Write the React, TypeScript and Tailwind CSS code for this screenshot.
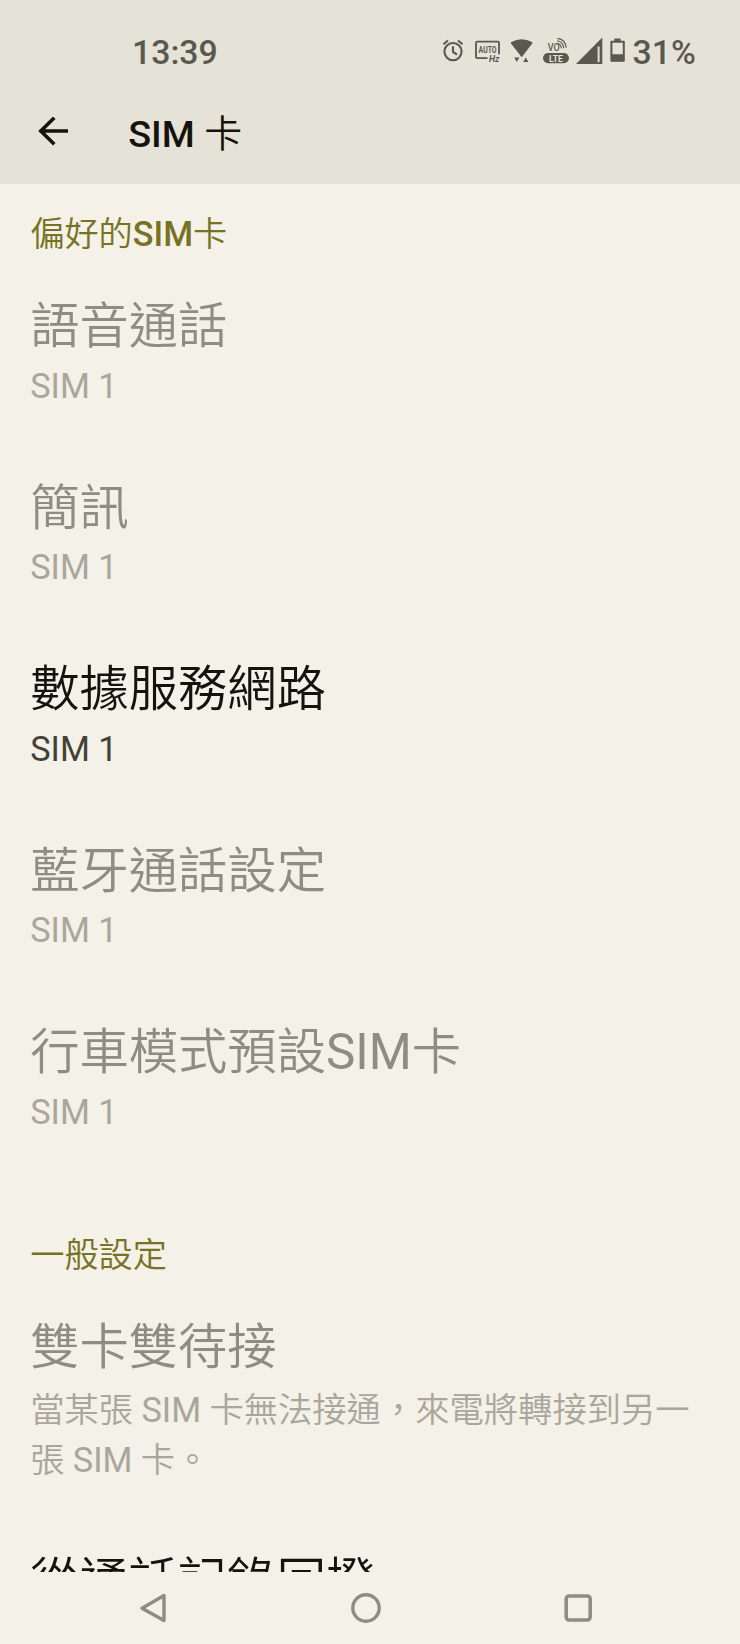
type Item = { title: string; summary: string; enabled?: boolean };

const preferred: Item[] = [
  { title: '語音通話', summary: 'SIM 1' },
  { title: '簡訊', summary: 'SIM 1' },
  { title: '數據服務網路', summary: 'SIM 1', enabled: true },
  { title: '藍牙通話設定', summary: 'SIM 1' },
  { title: '行車模式預設SIM卡', summary: 'SIM 1' },
];

/** Sets Latin runs in regular weight beside the lighter Chinese glyphs. */
function Mixed({ text }: { text: string }) {
  return (
    <>
      {text.split(/([A-Za-z0-9]+)/).map((part, i) =>
        i % 2 ? (
          <span key={i} className="font-normal">
            {part}
          </span>
        ) : (
          part
        ),
      )}
    </>
  );
}

function StatusIcons() {
  return (
    <svg className="h-[30px] w-[186px] shrink-0" viewBox="440 36 186 30" fill="none" stroke="#5a594f">
      {/* alarm */}
      <circle cx="453" cy="51.6" r="8.6" strokeWidth="2.1" />
      <path d="M453 46.3v5.6l4 2.8M443.4 44.2l4.6-3.7M462.6 44.2l-4.6-3.7" strokeWidth="2.1" />
      {/* auto refresh rate */}
      <path d="M487.5 58.2h-10.3q-1.2 0-1.2-1.2V42.8q0-1.2 1.2-1.2h20.6q1.2 0 1.2 1.2v11.4" strokeWidth="1.8" />
      <g fill="#5a594f" stroke="none" fontFamily="Roboto, sans-serif" fontWeight="700">
        <text x="478.6" y="53" fontSize="9.2" textLength="18" lengthAdjust="spacingAndGlyphs">AUTO</text>
        <text x="489" y="61.8" fontSize="8.4" fontStyle="italic" textLength="10.4" lengthAdjust="spacingAndGlyphs">Hz</text>
      </g>
      {/* wifi with traffic arrows */}
      <g fill="#5a594f" stroke="none">
        <path d="M521.7 57.2L510.8 43.2Q510.6 42.4 511.4 42Q521.7 36.4 532 42Q532.8 42.4 532.4 43.2Z" />
        <path d="M514.2 57.6h5.2l-2.6 4.4zM523.2 62h5.2l-2.6-4.5z" />
      </g>
      {/* VoLTE */}
      <g fill="#5a594f" stroke="none" fontFamily="Roboto, sans-serif">
        <text x="547.8" y="51.2" fontSize="10.2" fontWeight="500" textLength="12" lengthAdjust="spacingAndGlyphs">VO</text>
        <rect x="543" y="53" width="26" height="10.2" rx="5.1" />
        <text x="549" y="61.5" fontSize="9.4" fontWeight="700" fill="#e5e3d8" textLength="13.8" lengthAdjust="spacingAndGlyphs">LTE</text>
      </g>
      <path d="M557.2 43.4q3.8 .8 4.2 5M557.2 40.8q6 1 6.6 7.4M557.4 38.4q8.2 1.2 8.8 9.4" strokeWidth="1.1" />
      {/* signal */}
      <path d="M576 64L602.3 37.6V64Z" fill="#5a594f" stroke="none" />
      <path d="M598.6 46.5v15.6" stroke="#e5e3d8" strokeWidth="2" />
      {/* battery */}
      <path d="M611.4 41.8h12.4v19h-12.4z" strokeWidth="2" strokeLinejoin="round" />
      <path d="M614.4 38.4h6.2v3h-6.2zM611 54.2h13v7h-13z" fill="#5a594f" stroke="none" />
    </svg>
  );
}

function SectionHeader({ children, className }: { children: React.ReactNode; className: string }) {
  return <h2 className={`text-[34.2px] leading-[49.3px] text-[#787224] ${className}`}>{children}</h2>;
}

function Row({ item, className = 'pb-[61.5px]', summaryClass = '' }: { item: Item; className?: string; summaryClass?: string }) {
  return (
    <div className={className}>
      <div className={`text-[49.3px] leading-[70.6px] whitespace-nowrap ${item.enabled ? 'text-[#15130b]' : 'text-[#8f8c82]'}`}>
        <Mixed text={item.title} />
      </div>
      <div className={`text-[34.3px] leading-[49.3px] ${summaryClass} ${item.enabled ? 'text-[#434136]' : 'text-[#a9a79b]'}`}>
        <Mixed text={item.summary} />
      </div>
    </div>
  );
}

export default function App() {
  return (
    <div
      lang="zh-Hant"
      className="flex h-[1644px] w-[740px] flex-col overflow-hidden bg-[#f4f1e8] font-['Roboto','Noto_Sans_CJK_TC',sans-serif]"
    >
      <header className="h-[184px] shrink-0 bg-[#e5e3d8]">
        <div className="flex h-[104px] items-start pt-[31px] text-[33.8px] leading-[43px] font-medium text-[#5a594f]">
          <span className="w-[308px] pl-[132px]">13:39</span>
          <span className="flex pt-[5px] pl-[132px]">
            <StatusIcons />
          </span>
          <span className="pl-[6.6px]">31%</span>
        </div>
        <div className="flex h-[60px] items-center pl-[36px] text-[#15130b]">
          <svg className="h-[34px] w-[34px]" viewBox="0 0 34 34" fill="none" stroke="currentColor" strokeWidth="3.6">
            <path d="M32 14H4.5M18.3 0.8L4.8 14l13.5 13.2" />
          </svg>
          <h1 className="pl-[58.2px] text-[37.8px] leading-[60px] font-[350]">
            <span className="font-medium">SIM </span>卡
          </h1>
        </div>
      </header>
      <main className="h-[1388px] shrink-0 overflow-hidden pr-[43px] pl-[30.2px] font-[350]">
        <SectionHeader className="pt-[25.6px] pb-[32.5px]">
          偏好的<span className="font-medium">SIM</span>卡
        </SectionHeader>
        {preferred.map((item) => (
          <Row key={item.title} item={item} />
        ))}
        <SectionHeader className="pt-[32.2px] pb-[32.2px]">一般設定</SectionHeader>
        <Row
          item={{ title: '雙卡雙待接', summary: '當某張 SIM 卡無法接通，來電將轉接到另一張 SIM 卡。' }}
          className="pb-[61px]"
          summaryClass="pt-[3.6px]"
        />
        <Row item={{ title: '從通話記錄回撥', summary: '', enabled: true }} />
      </main>
      <nav className="flex h-[72px] shrink-0 items-start justify-between pt-[20px] pr-[147px] pl-[138px] text-[#8f8c84]">
        <svg className="h-[32px] w-[30px]" viewBox="0 0 30 32" fill="none" stroke="currentColor" strokeWidth="3.4" strokeLinejoin="round">
          <path d="M26 3.6v25L4 16.2z" />
        </svg>
        <svg className="h-[32px] w-[32px]" viewBox="0 0 32 32" fill="none" stroke="currentColor" strokeWidth="3.4">
          <circle cx="16" cy="16" r="13.2" />
        </svg>
        <svg className="h-[32px] w-[30px]" viewBox="0 0 30 32" fill="none" stroke="currentColor" strokeWidth="3.6">
          <rect x="3.2" y="4" width="24" height="24" rx="3" />
        </svg>
      </nav>
    </div>
  );
}
